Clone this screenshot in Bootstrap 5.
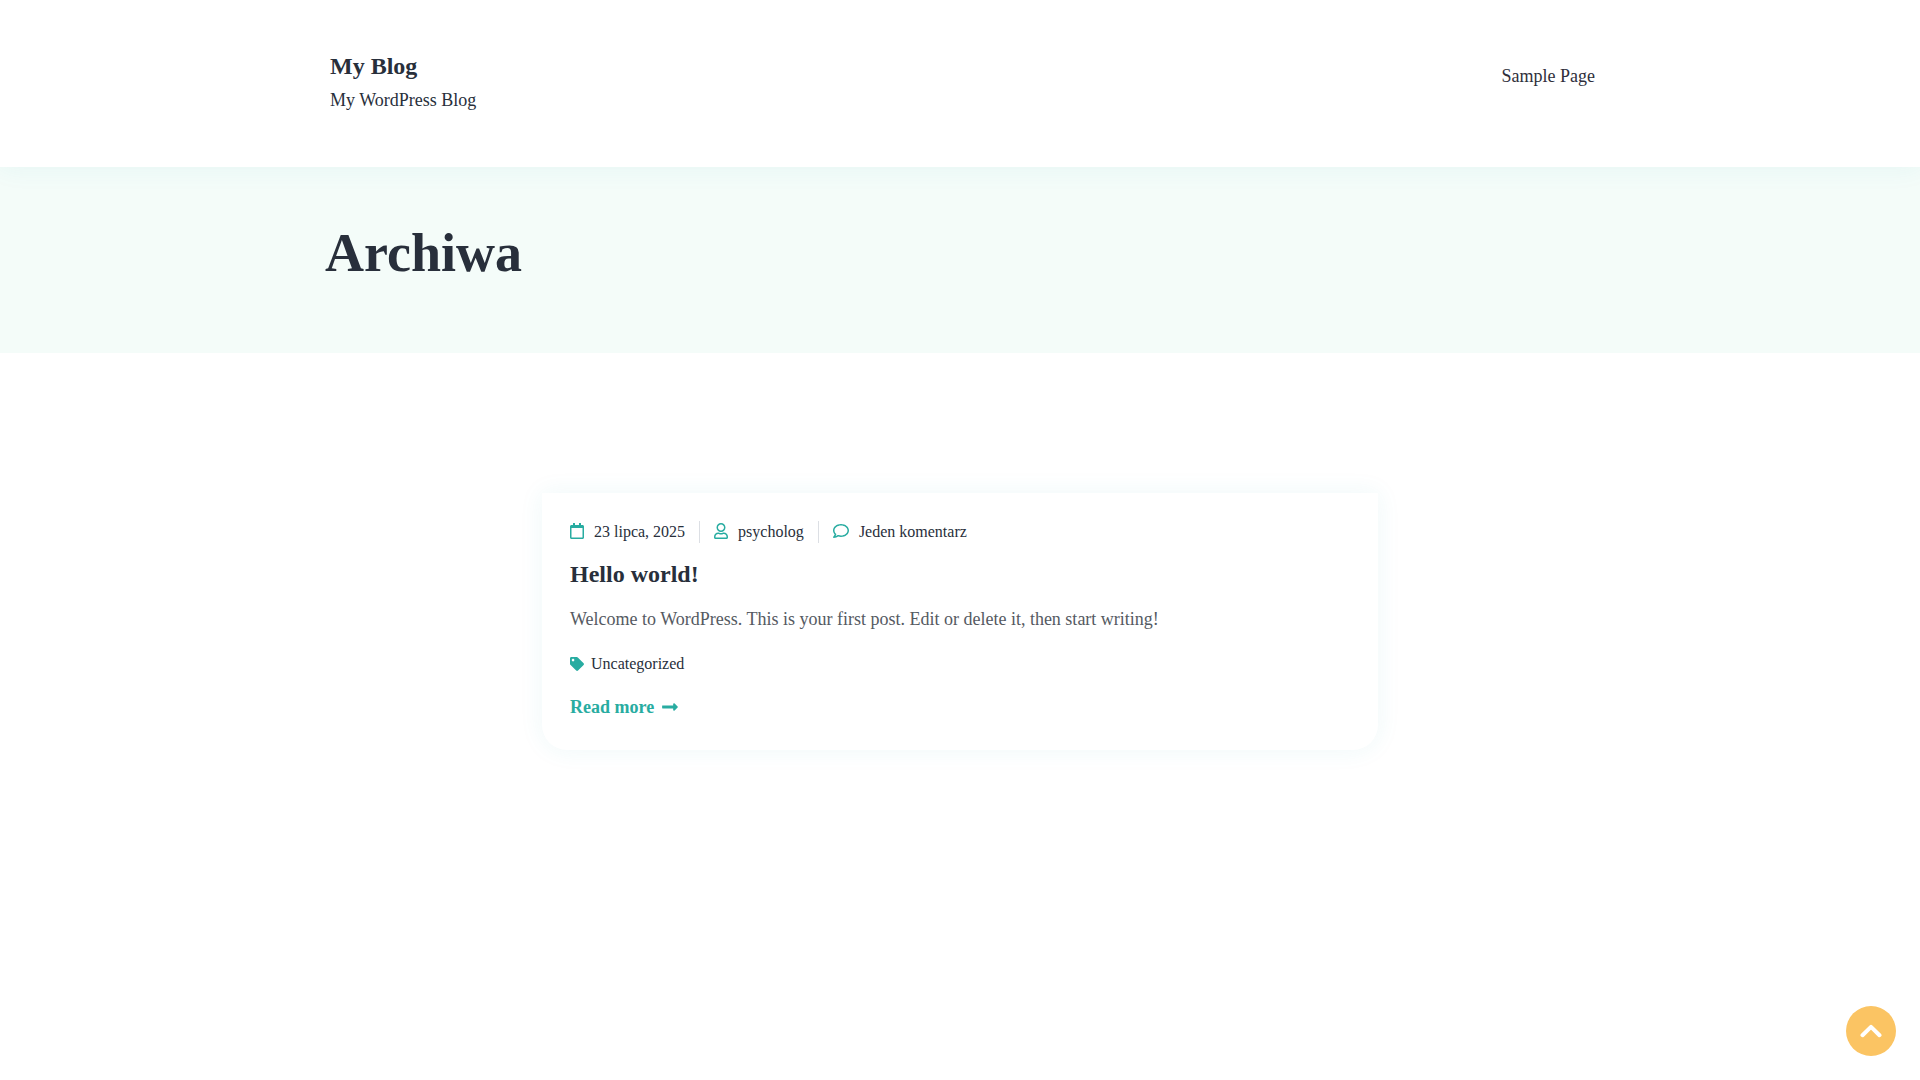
<!DOCTYPE html>
<html lang="pl">
<head>
<meta charset="utf-8">
<meta name="viewport" content="width=device-width, initial-scale=1">
<title>Archiwa – My Blog</title>
<link href="https://cdn.jsdelivr.net/npm/bootstrap@5.3.0/dist/css/bootstrap.min.css" rel="stylesheet">
<style>
  :root { --teal: #28aca1; --ink: #282f3b; }
  body { font-family: "Liberation Serif", serif; font-size: 18px; line-height: 28px; color: #555a62; background: #fff; }
  a { text-decoration: none; color: var(--ink); }
  .wrap { max-width: 1300px; padding-left: 15px; padding-right: 15px; }
  .site-header { background: #fff; box-shadow: 0 0 25px rgba(40, 172, 181, .08); z-index: 2; padding: 48px 0 50px; }
  .site-name { font-size: 24px; line-height: 36px; font-weight: 700; color: var(--ink); margin: 0; }
  .tagline { line-height: 33px; color: var(--ink); margin: 0; }
  .brand { padding-left: 5px; }
  .main-menu a { display: block; padding: 14px 0; color: #2f2f3b; }
  .hero { background: #f4fcf9; padding: 53px 0 67px; }
  .hero h1 { font-size: 54px; line-height: 66px; font-weight: 700; color: var(--ink); margin: 0; }
  .posts { max-width: 836px; padding-top: 140px; padding-bottom: 140px; }
  .post { background: #fff; border-radius: 0 0 25px 25px; padding: 28px 28px 29px; box-shadow: 0 0 25px rgba(40, 172, 181, .08); }
  .post-meta { font-size: 16px; line-height: 22px; }
  .post-meta li + li { border-left: 1px solid #dcdfe4; margin-left: 14px; padding-left: 14px; }
  .post-meta a { gap: 10px; }
  .post-meta .ic { margin-bottom: 2px; }
  .post-title { font-size: 24px; line-height: 32px; font-weight: 700; margin: 15px 0; }
  .post-text { margin: 0 0 17px; }
  .post-cat { font-size: 16px; line-height: 28px; gap: 7px; margin-bottom: 15px; }
  .read-more { font-weight: 700; color: var(--teal); gap: 8px; }
  .ic { fill: var(--teal); height: 16px; flex: none; }
  .read-more .ic { height: 18px; }
  .to-top { width: 50px; height: 50px; right: 24px; bottom: 24px; background: #fbc463; border: 0; padding: 0; z-index: 5; }
  .to-top path { fill: none; stroke: #fff; stroke-width: 4; stroke-linecap: round; stroke-linejoin: round; }
</style>
<script src="https://cdn.jsdelivr.net/npm/bootstrap@5.3.0/dist/js/bootstrap.bundle.min.js" defer></script>
</head>
<body>
<header class="site-header position-relative">
  <div class="container-fluid wrap d-flex justify-content-between align-items-start">
    <div class="brand">
      <p class="site-name"><a href="#">My Blog</a></p>
      <p class="tagline">My WordPress Blog</p>
    </div>
    <nav class="main-menu"><a href="#">Sample Page</a></nav>
  </div>
</header>
<section class="hero">
  <div class="container-fluid wrap"><h1>Archiwa</h1></div>
</section>
<main class="container-fluid posts px-0">
  <article class="post">
    <ul class="post-meta list-unstyled d-flex flex-wrap mb-0">
      <li><a href="#" class="d-flex align-items-center"><svg class="ic" width="14" viewBox="0 0 448 512" aria-hidden="true"><path d="M400 64h-48V12c0-6.600-5.400-12-12-12h-40c-6.600 0-12 5.400-12 12v52H160V12c0-6.600-5.400-12-12-12h-40c-6.600 0-12 5.400-12 12v52H48C21.500 64 0 85.500 0 112v352c0 26.500 21.500 48 48 48h352c26.500 0 48-21.500 48-48V112c0-26.500-21.500-48-48-48zm-6 400H54c-3.300 0-6-2.700-6-6V160h352v298c0 3.300-2.700 6-6 6z"/></svg>23 lipca, 2025</a></li>
      <li><a href="#" class="d-flex align-items-center"><svg class="ic" width="14" viewBox="0 0 448 512" aria-hidden="true"><path d="M313.600 304c-28.700 0-42.500 16-89.600 16-47.100 0-60.800-16-89.600-16C60.200 304 0 364.200 0 438.400V464c0 26.500 21.500 48 48 48h352c26.500 0 48-21.500 48-48v-25.600c0-74.200-60.200-134.400-134.400-134.400zM400 464H48v-25.600c0-47.600 38.800-86.400 86.400-86.400 14.600 0 38.300 16 89.600 16 51.700 0 74.900-16 89.600-16 47.600 0 86.400 38.800 86.400 86.400V464zM224 288c79.500 0 144-64.500 144-144S303.500 0 224 0 80 64.500 80 144s64.500 144 144 144zm0-240c52.900 0 96 43.100 96 96s-43.100 96-96 96-96-43.100-96-96 43.100-96 96-96z"/></svg>psycholog</a></li>
      <li><a href="#" class="d-flex align-items-center"><svg class="ic" width="16" viewBox="0 0 512 512" aria-hidden="true"><path d="M256 32C114.600 32 0 125.100 0 240c0 47.600 19.900 91.200 52.900 126.300C38 405.700 7 439.100 6.500 439.500c-6.600 7-8.400 17.200-4.600 26S14.400 480 24 480c61.500 0 110-25.700 139.100-46.300C192 442.800 223.200 448 256 448c141.400 0 256-93.100 256-208S397.400 32 256 32zm0 368c-26.700 0-53.100-4.100-78.400-12.100l-22.700-7.200-19.500 13.800c-14.300 10.100-33.900 21.400-57.500 29 7.300-12.100 14.400-25.700 19.900-40.200l10.600-28.100-20.600-21.800C69.700 314.100 48 282.200 48 240c0-88.200 93.300-160 208-160s208 71.800 208 160-93.300 160-208 160z"/></svg>Jeden komentarz</a></li>
    </ul>
    <h2 class="post-title"><a href="#">Hello world!</a></h2>
    <p class="post-text">Welcome to WordPress. This is your first post. Edit or delete it, then start writing!</p>
    <div class="post-cat d-flex align-items-center"><svg class="ic" width="14" viewBox="0 0 512 512" aria-hidden="true"><path d="M0 252.118V48C0 21.490 21.490 0 48 0h204.118a48 48 0 0 1 33.941 14.059l211.882 211.882c18.745 18.745 18.745 49.137 0 67.882L293.823 497.941c-18.745 18.745-49.137 18.745-67.882 0L14.059 286.059A48 48 0 0 1 0 252.118zM112 64c-26.510 0-48 21.490-48 48s21.490 48 48 48 48-21.490 48-48-21.490-48-48-48z"/></svg><a href="#">Uncategorized</a></div>
    <a href="#" class="read-more d-flex align-items-center">Read more <svg class="ic" width="16" viewBox="0 0 448 512" aria-hidden="true"><path d="M313.941 216H12c-6.627 0-12 5.373-12 12v56c0 6.627 5.373 12 12 12h301.941v46.059c0 21.382 25.851 32.090 40.971 16.971l86.059-86.059c9.373-9.373 9.373-24.569 0-33.941l-86.059-86.059c-15.119-15.119-40.971-4.411-40.971 16.971V216z"/></svg></a>
  </article>
</main>
<button type="button" class="to-top position-fixed rounded-circle d-flex align-items-center justify-content-center" aria-label="Do góry"><svg width="22" height="14" viewBox="0 0 22 14" aria-hidden="true"><path d="M2.500 11.200 11 2.900l8.500 8.300"/></svg></button>
</body>
</html>
